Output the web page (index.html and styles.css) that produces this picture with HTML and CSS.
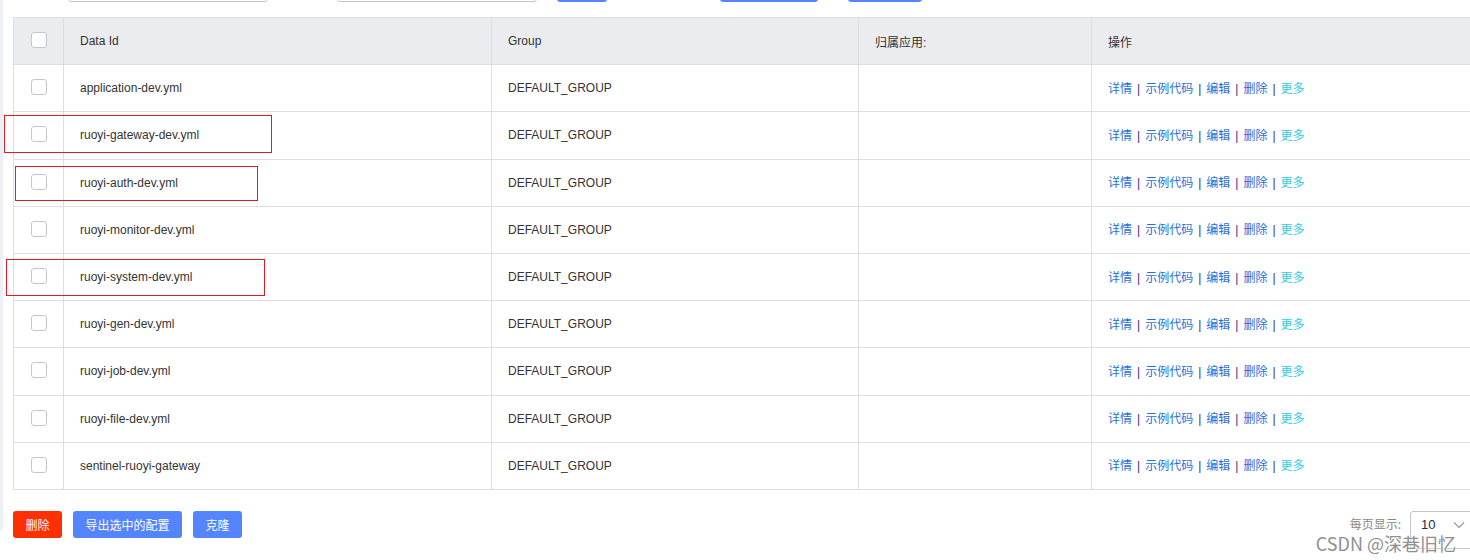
FILE: index.html
```html
<!DOCTYPE html>
<html lang="zh-CN">
<head>
    <meta charset="UTF-8">
    <title>配置列表</title>
    <link rel="stylesheet" href="styles.css">
</head>
<body>

<div class="page">
    <!-- search bar, scrolled mostly out of view -->
    <div class="toolbar">
        <div class="input input-a"></div>
        <div class="input input-b"></div>
        <div class="btn-top btn-top-a"></div>
        <div class="btn-top btn-top-b"></div>
        <div class="btn-top btn-top-c"></div>
    </div>

    <div class="table-wrap">
        <table class="config-table">
            <colgroup>
                <col class="col-check">
                <col class="col-id">
                <col class="col-group">
                <col class="col-app">
                <col class="col-ops">
            </colgroup>
            <thead>
                <tr>
                    <th class="check-cell"><span class="checkbox"></span></th>
                    <th>Data Id</th>
                    <th>Group</th>
                    <th>归属应用:</th>
                    <th>操作</th>
                </tr>
            </thead>
            <tbody id="rows"></tbody>
        </table>

        <!-- red annotation boxes -->
        <div class="mark mark-1"></div>
        <div class="mark mark-2"></div>
        <div class="mark mark-3"></div>
    </div>

    <div class="footer">
        <div class="actions">
            <button class="btn btn-danger">删除</button>
            <button class="btn btn-primary">导出选中的配置</button>
            <button class="btn btn-primary">克隆</button>
        </div>
        <div class="pager">
            <span class="pager-label">每页显示:</span>
            <div class="select">
                <span class="select-value">10</span>
                <svg class="chevron" width="12" height="8" viewBox="0 0 12 8"><path d="M1 1.5 L6 6.5 L11 1.5" fill="none" stroke="#999" stroke-width="1.2"/></svg>
            </div>
        </div>
    </div>
</div>

<div class="watermark">CSDN @深巷旧忆</div>

<script>
    var ids = [
        'application-dev.yml',
        'ruoyi-gateway-dev.yml',
        'ruoyi-auth-dev.yml',
        'ruoyi-monitor-dev.yml',
        'ruoyi-system-dev.yml',
        'ruoyi-gen-dev.yml',
        'ruoyi-job-dev.yml',
        'ruoyi-file-dev.yml',
        'sentinel-ruoyi-gateway'
    ];

    var html = '';
    ids.forEach(function(id) {
        html += '<tr>' +
            '<td class="check-cell"><span class="checkbox"></span></td>' +
            '<td>' + id + '</td>' +
            '<td>DEFAULT_GROUP</td>' +
            '<td></td>' +
            '<td class="ops">' +
                '<a>详情</a><span class="sep">|</span>' +
                '<a>示例代码</a><span class="sep">|</span>' +
                '<a>编辑</a><span class="sep">|</span>' +
                '<a>删除</a><span class="sep">|</span>' +
                '<a class="more">更多</a>' +
            '</td>' +
        '</tr>';
    });
    document.getElementById('rows').innerHTML = html;
</script>

</body>
</html>
```

FILE: styles.css
```css
html, body {
    margin: 0;
    padding: 0;
    background: #ffffff;
    overflow: hidden;
}
body {
    font-family: "Liberation Sans", Arial, "Noto Sans CJK SC", sans-serif;
    font-size: 12px;
    color: #333;
    width: 1470px;
    height: 560px;
    position: relative;
}
.page {
    border-left: 3px solid #eef0f5;
    padding-left: 10px;
    height: 560px;
    box-sizing: border-box;
}
.toolbar {
    display: flex;
    height: 32px;
    margin-top: -30px;
    margin-bottom: 15px;
}
.input {
    border: 1px solid #c4c6cf;
    border-radius: 3px;
    box-sizing: border-box;
    height: 32px;
}
.input-a {
    width: 200px;
    margin-left: 55px;
}
.input-b {
    width: 200px;
    margin-left: 69px;
}
.btn-top {
    height: 32px;
    background: #5584ff;
    border-radius: 3px;
}
.btn-top-a {
    width: 50px;
    margin-left: 20px;
}
.btn-top-b {
    width: 98px;
    margin-left: 113px;
}
.btn-top-c {
    width: 74px;
    margin-left: 30px;
}

.table-wrap {
    position: relative;
    margin-left: -13px;
    padding-left: 13px;
}
.config-table {
    border-collapse: collapse;
    table-layout: fixed;
    width: 1480px;
}
.col-check { width: 50px; }
.col-id { width: 428px; }
.col-group { width: 367px; }
.col-app { width: 233px; }
.config-table th,
.config-table td {
    border: 1px solid #dcdee3;
    height: 46.2px;
    padding: 0 0 0 16px;
    text-align: left;
    font-weight: normal;
    white-space: nowrap;
}
.config-table th {
    background: #ebecf0;
    color: #333;
}
.config-table td {
    color: #333;
}
.config-table .check-cell {
    padding: 0;
    text-align: center;
}
.checkbox {
    display: inline-block;
    width: 14px;
    height: 14px;
    border: 1px solid #c4c6cf;
    border-radius: 3px;
    background: #fff;
    vertical-align: middle;
    position: relative;
    top: -1px;
}
.ops a,
.ops .sep {
    position: relative;
    top: -1px;
}
.ops a {
    color: #1f6fd9;
    font-family: "Noto Sans CJK SC", sans-serif;
}
.ops a.more {
    color: #30cbe2;
}
.ops .sep {
    color: #3b2f7a;
    margin: 0 5px;
}

.mark {
    position: absolute;
    border: 1px solid #e01b24;
    box-sizing: border-box;
}
.mark-1 {
    left: 4px;
    top: 98px;
    width: 268px;
    height: 38px;
}
.mark-2 {
    left: 15px;
    top: 149px;
    width: 243px;
    height: 35px;
}
.mark-3 {
    left: 6px;
    top: 242px;
    width: 259px;
    height: 37px;
}

.footer {
    display: flex;
    justify-content: space-between;
    align-items: flex-start;
    margin-top: 21px;
}
.actions {
    display: flex;
    gap: 11px;
}
.btn {
    height: 27px;
    border: none;
    border-radius: 3px;
    color: #fff;
    font-family: "Noto Sans CJK SC", sans-serif;
    font-size: 12px;
    padding: 0 12.5px;
    cursor: pointer;
}
.btn-danger {
    background: #ff3000;
}
.btn-primary {
    background: #5584ff;
}
.pager {
    display: flex;
    align-items: flex-start;
    margin-right: -8px;
}
.pager-label {
    color: #888;
    font-family: "Noto Sans CJK SC", sans-serif;
    line-height: 16px;
    margin-top: 5px;
    margin-right: 9px;
}
.select {
    width: 68px;
    height: 38px;
    border: 1px solid #c4c6cf;
    border-radius: 3px;
    box-sizing: border-box;
    display: flex;
    align-items: flex-start;
    padding: 5px 0 0 10px;
    color: #1d2a4a;
    font-size: 13px;
}
.select-value {
    line-height: 16px;
}
.chevron {
    margin: 4px 0 0 18px;
}

.watermark {
    position: absolute;
    right: 14px;
    bottom: 8px;
    line-height: 1;
    font-family: "Noto Sans CJK SC", sans-serif;
    font-size: 18px;
    color: #8f8f8f;
    text-shadow: 0 0 2px #fff, 0 0 2px #fff;
}
```
